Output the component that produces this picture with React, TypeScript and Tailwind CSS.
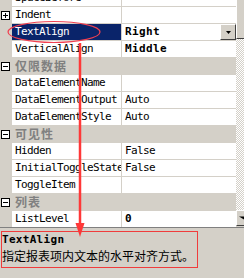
import React from "react";

type Row =
  | { kind: "prop"; name: string; value?: string; bold?: boolean; expand?: boolean; selected?: boolean; dropdown?: boolean }
  | { kind: "cat"; name: string };

const rows: Row[] = [
  { kind: "prop", name: "SpaceBefore" },
  { kind: "prop", name: "Indent", expand: true },
  { kind: "prop", name: "TextAlign", value: "Right", bold: true, selected: true, dropdown: true },
  { kind: "prop", name: "VerticalAlign", value: "Middle", bold: true },
  { kind: "cat", name: "仅限数据" },
  { kind: "prop", name: "DataElementName" },
  { kind: "prop", name: "DataElementOutput", value: "Auto" },
  { kind: "prop", name: "DataElementStyle", value: "Auto" },
  { kind: "cat", name: "可见性" },
  { kind: "prop", name: "Hidden", value: "False" },
  { kind: "prop", name: "InitialToggleState", value: "False" },
  { kind: "prop", name: "ToggleItem" },
  { kind: "cat", name: "列表" },
  { kind: "prop", name: "ListLevel", value: "0", bold: true },
];

const mono = "font-['DejaVu_Sans_Mono',monospace] text-[11px] tracking-[-0.62px]";

function Box({ plus }: { plus?: boolean }) {
  return (
    <svg width="9" height="9" viewBox="0 0 9 9" className="ml-px">
      <rect x="0.5" y="0.5" width="8" height="8" fill="#fff" stroke="#000" />
      <line x1="2" y1="4.5" x2="7" y2="4.5" stroke="#000" />
      {plus && <line x1="4.5" y1="2" x2="4.5" y2="7" stroke="#000" />}
    </svg>
  );
}

function PropRow({ row }: { row: Row }) {
  if (row.kind === "cat") {
    return (
      <div className="flex h-4 items-center">
        <div className="w-3 flex items-center">
          <Box />
        </div>
        <span className="pl-[3px] text-[12px] font-bold tracking-[1px] text-[#808080] font-['Noto_Sans_CJK_SC',sans-serif] leading-4">
          {row.name}
        </span>
      </div>
    );
  }
  return (
    <div className="flex h-4">
      <div className="w-3 flex items-center">{row.expand && <Box plus />}</div>
      <div
        className={`w-[109px] overflow-hidden whitespace-nowrap pl-[3px] leading-4 ${mono} ${
          row.selected ? "bg-[#0a246a] text-white" : "bg-white text-black"
        }`}
      >
        {row.name}
      </div>
      <div className="w-px" />
      <div className="flex flex-1 bg-white">
        <div
          className={`flex-1 pl-[3px] leading-4 text-black ${mono} ${
            row.bold ? "font-bold tracking-[0.38px]" : ""
          }`}
        >
          {row.value}
        </div>
        {row.dropdown && (
          <div className="flex h-4 w-4 items-center justify-center border border-t-white border-l-white border-r-[#404040] border-b-[#404040] bg-[#d4d0c8]">
            <svg width="5" height="3" viewBox="0 0 5 3">
              <polygon points="0,0 5,0 2.5,3" fill="#000" />
            </svg>
          </div>
        )}
      </div>
    </div>
  );
}

export default function App() {
  return (
    <div className="relative h-[278px] w-[244px] overflow-hidden bg-[#d4d0c8]">
      <div className="flex h-[226px]">
        <div className="-mt-[10px] flex w-[236px] flex-col gap-px">
          {rows.map((r, i) => (
            <PropRow key={i} row={r} />
          ))}
        </div>
        <div className="flex w-2 flex-col">
          <div className="h-[39px] border-l border-l-white border-b border-b-[#404040] bg-[#d4d0c8]" />
          <div className="flex-1 bg-[repeating-conic-gradient(#ffffff_0_25%,#d4d0c8_0_50%)] bg-[length:2px_2px]" />
          <div className="flex h-4 items-center border-l border-l-white border-t border-t-white border-b border-b-[#404040] bg-[#d4d0c8] pl-[2px]">
            <svg width="7" height="4" viewBox="0 0 7 4">
              <polygon points="0,0 14,0 7,4" fill="#000" />
            </svg>
          </div>
        </div>
      </div>
      <div className="mt-px h-px bg-[#808080]" />
      <div className="px-[2px] pt-[5px]">
        <div className={`font-['DejaVu_Sans_Mono',monospace] text-[11px] font-bold tracking-[0.3px] leading-[14px] text-black`}>
          TextAlign
        </div>
        <div className="mt-[1px] font-['Noto_Sans_CJK_SC',sans-serif] text-[12px] leading-[16px] text-black">
          指定报表项内文本的水平对齐方式。
        </div>
      </div>
      <svg className="pointer-events-none absolute inset-0" width="244" height="278" viewBox="0 0 244 278">
        <ellipse cx="54" cy="32" rx="46" ry="10.5" fill="none" stroke="#f04050" strokeWidth="1.2" />
        <line x1="80" y1="43" x2="80" y2="225" stroke="#ff3838" strokeWidth="2.5" />
        <polygon points="75.5,223 84.5,223 80,237" fill="#ff3838" />
        <rect x="1.5" y="231.5" width="196" height="36" fill="none" stroke="#f03c3c" strokeWidth="1" />
      </svg>
    </div>
  );
}
